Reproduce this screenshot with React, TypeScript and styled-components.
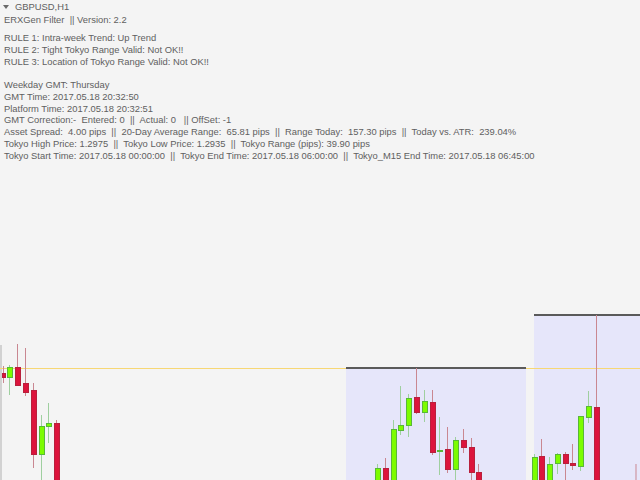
import styled, { createGlobalStyle } from 'styled-components'

type Candle = {
  x: number
  w?: number
  open: number
  close: number
  high: number
  low: number
}

// y values are screen coordinates; bull when close < open (higher price = smaller y)
const CANDLES: Candle[] = [
  // left edge of the chart
  { x: 2, w: 3, open: 373, close: 377, high: 366, low: 383 },
  { x: 7, open: 377, close: 367, high: 365, low: 395 },
  { x: 15, open: 367, close: 385, high: 344, low: 385 },
  { x: 23, open: 383, close: 392, high: 348, low: 396 },
  { x: 31, open: 390, close: 454, high: 383, low: 468 },
  { x: 39, open: 454, close: 426, high: 415, low: 482 },
  { x: 46, open: 426, close: 423, high: 403, low: 443 },
  { x: 54, open: 423, close: 482, high: 420, low: 482 },
  // first Tokyo session
  { x: 375, open: 482, close: 468, high: 464, low: 482 },
  { x: 383, open: 468, close: 482, high: 458, low: 482 },
  { x: 391, open: 482, close: 429, high: 420, low: 482 },
  { x: 398, open: 430, close: 425, high: 386, low: 435 },
  { x: 406, open: 425, close: 398, high: 394, low: 437 },
  { x: 414, open: 397, close: 412, high: 368, low: 414 },
  { x: 422, open: 412, close: 401, high: 390, low: 422 },
  { x: 430, open: 402, close: 452, high: 390, low: 455 },
  { x: 437, open: 451, close: 450, high: 417, low: 475 },
  { x: 445, open: 449, close: 469, high: 427, low: 473 },
  { x: 453, open: 469, close: 440, high: 437, low: 482 },
  { x: 461, open: 440, close: 447, high: 429, low: 453 },
  { x: 469, open: 447, close: 472, high: 438, low: 482 },
  { x: 476, open: 472, close: 482, high: 464, low: 482 },
  // second Tokyo session
  { x: 532, open: 482, close: 457, high: 454, low: 482 },
  { x: 539, open: 456, close: 482, high: 439, low: 482 },
  { x: 547, open: 482, close: 464, high: 457, low: 482 },
  { x: 555, open: 463, close: 454, high: 453, low: 474 },
  { x: 563, open: 454, close: 463, high: 452, low: 482 },
  { x: 570, open: 463, close: 465, high: 444, low: 470 },
  { x: 578, open: 466, close: 416, high: 416, low: 471 },
  { x: 586, open: 417, close: 406, high: 391, low: 423 },
  { x: 594, open: 407, close: 482, high: 315, low: 482 },
  { x: 636, w: 0, open: 482, close: 482, high: 464, low: 482 },
]

const SESSIONS = [
  { x: 346, top: 368, width: 180 },
  { x: 534, top: 315, width: 106 },
]

const INFO_LINES = [
  'Weekday GMT: Thursday',
  'GMT Time: 2017.05.18 20:32:50',
  'Platform Time: 2017.05.18 20:32:51',
  'GMT Correction:-  Entered: 0  ||  Actual: 0   || OffSet: -1',
  'Asset Spread:  4.00 pips  ||  20-Day Average Range:  65.81 pips  ||  Range Today:  157.30 pips  ||  Today vs. ATR:  239.04%',
  'Tokyo High Price: 1.2975  ||  Tokyo Low Price: 1.2935  ||  Tokyo Range (pips): 39.90 pips',
  'Tokyo Start Time: 2017.05.18 00:00:00  ||  Tokyo End Time: 2017.05.18 06:00:00  ||  Tokyo_M15 End Time: 2017.05.18 06:45:00',
]

const RULES = [
  'RULE 1: Intra-week Trend: Up Trend',
  'RULE 2: Tight Tokyo Range Valid: Not OK!!',
  'RULE 3: Location of Tokyo Range Valid: Not OK!!',
]

function CandleMark({ c }: { c: Candle }) {
  const w = c.w ?? 5
  const bull = c.close < c.open
  const mid = c.x + w / 2
  const top = Math.min(c.open, c.close)
  const h = Math.max(Math.abs(c.open - c.close), 1)
  return (
    <g>
      <line
        x1={mid}
        x2={mid}
        y1={c.high}
        y2={c.low}
        stroke={bull ? '#9fcf9f' : '#c98791'}
        strokeWidth={1}
      />
      {w > 0 && (
        <rect
          x={c.x + 0.5}
          y={top + 0.5}
          width={w}
          height={h}
          fill={bull ? '#7cfc00' : '#dc143c'}
          stroke={bull ? '#58b838' : '#b8203c'}
          strokeWidth={1}
        />
      )}
    </g>
  )
}

function PriceChart() {
  return (
    <ChartSvg viewBox="0 0 640 480" width={640} height={480}>
      <rect x={0} y={345} width={2} height={135} fill="#d2d2d2" />
      {SESSIONS.map((s) => (
        <rect key={s.x} x={s.x} y={s.top} width={s.width} height={480 - s.top} fill="#e6e6fa" />
      ))}
      <line x1={0} x2={640} y1={368.5} y2={368.5} stroke="#f7d774" strokeWidth={1} />
      {SESSIONS.map((s) => (
        <rect key={s.x} x={s.x} y={s.top - 1} width={s.width} height={2} fill="#5a5a5a" />
      ))}
      {CANDLES.map((c) => (
        <CandleMark key={c.x} c={c} />
      ))}
    </ChartSvg>
  )
}

export default function App() {
  return (
    <>
      <GlobalStyle />
      <Screen>
        <PriceChart />
        <Legend>
          <SymbolRow>
            <Caret />
            GBPUSD,H1
          </SymbolRow>
          <Title>ERXGen Filter&nbsp; || Version: 2.2</Title>
          <Block $gap={6.2}>
            {RULES.map((r) => (
              <Line key={r}>{r}</Line>
            ))}
          </Block>
          <Block $gap={11.6}>
            {INFO_LINES.map((l) => (
              <Line key={l}>{l}</Line>
            ))}
          </Block>
        </Legend>
      </Screen>
    </>
  )
}

const GlobalStyle = createGlobalStyle`
  html, body {
    margin: 0;
    padding: 0;
    background: #f4f4f4;
  }
`

const Screen = styled.div`
  width: 640px;
  height: 480px;
  overflow: hidden;
  background: #f4f4f4;
  display: grid;
  grid-template: 1fr / 1fr;
`

const ChartSvg = styled.svg`
  grid-area: 1 / 1;
  display: block;
`

const Legend = styled.div`
  grid-area: 1 / 1;
  align-self: start;
  padding: 1px 0 0 4px;
  font-family: 'Liberation Sans', Arial, sans-serif;
  font-size: 9.4px;
  line-height: 11.8px;
  color: #606060;
  white-space: pre;
`

const SymbolRow = styled.div`
  display: flex;
  align-items: center;
  gap: 4px;
`

const Caret = styled.span`
  width: 0;
  height: 0;
  border-left: 3px solid transparent;
  border-right: 3px solid transparent;
  border-top: 4px solid #6a6a6a;
  margin-left: -1px;
  margin-right: 2px;
`

const Title = styled.div`
  margin-top: 1.2px;
`

const Block = styled.div<{ $gap: number }>`
  margin-top: ${({ $gap }) => $gap}px;
`

const Line = styled.div``
